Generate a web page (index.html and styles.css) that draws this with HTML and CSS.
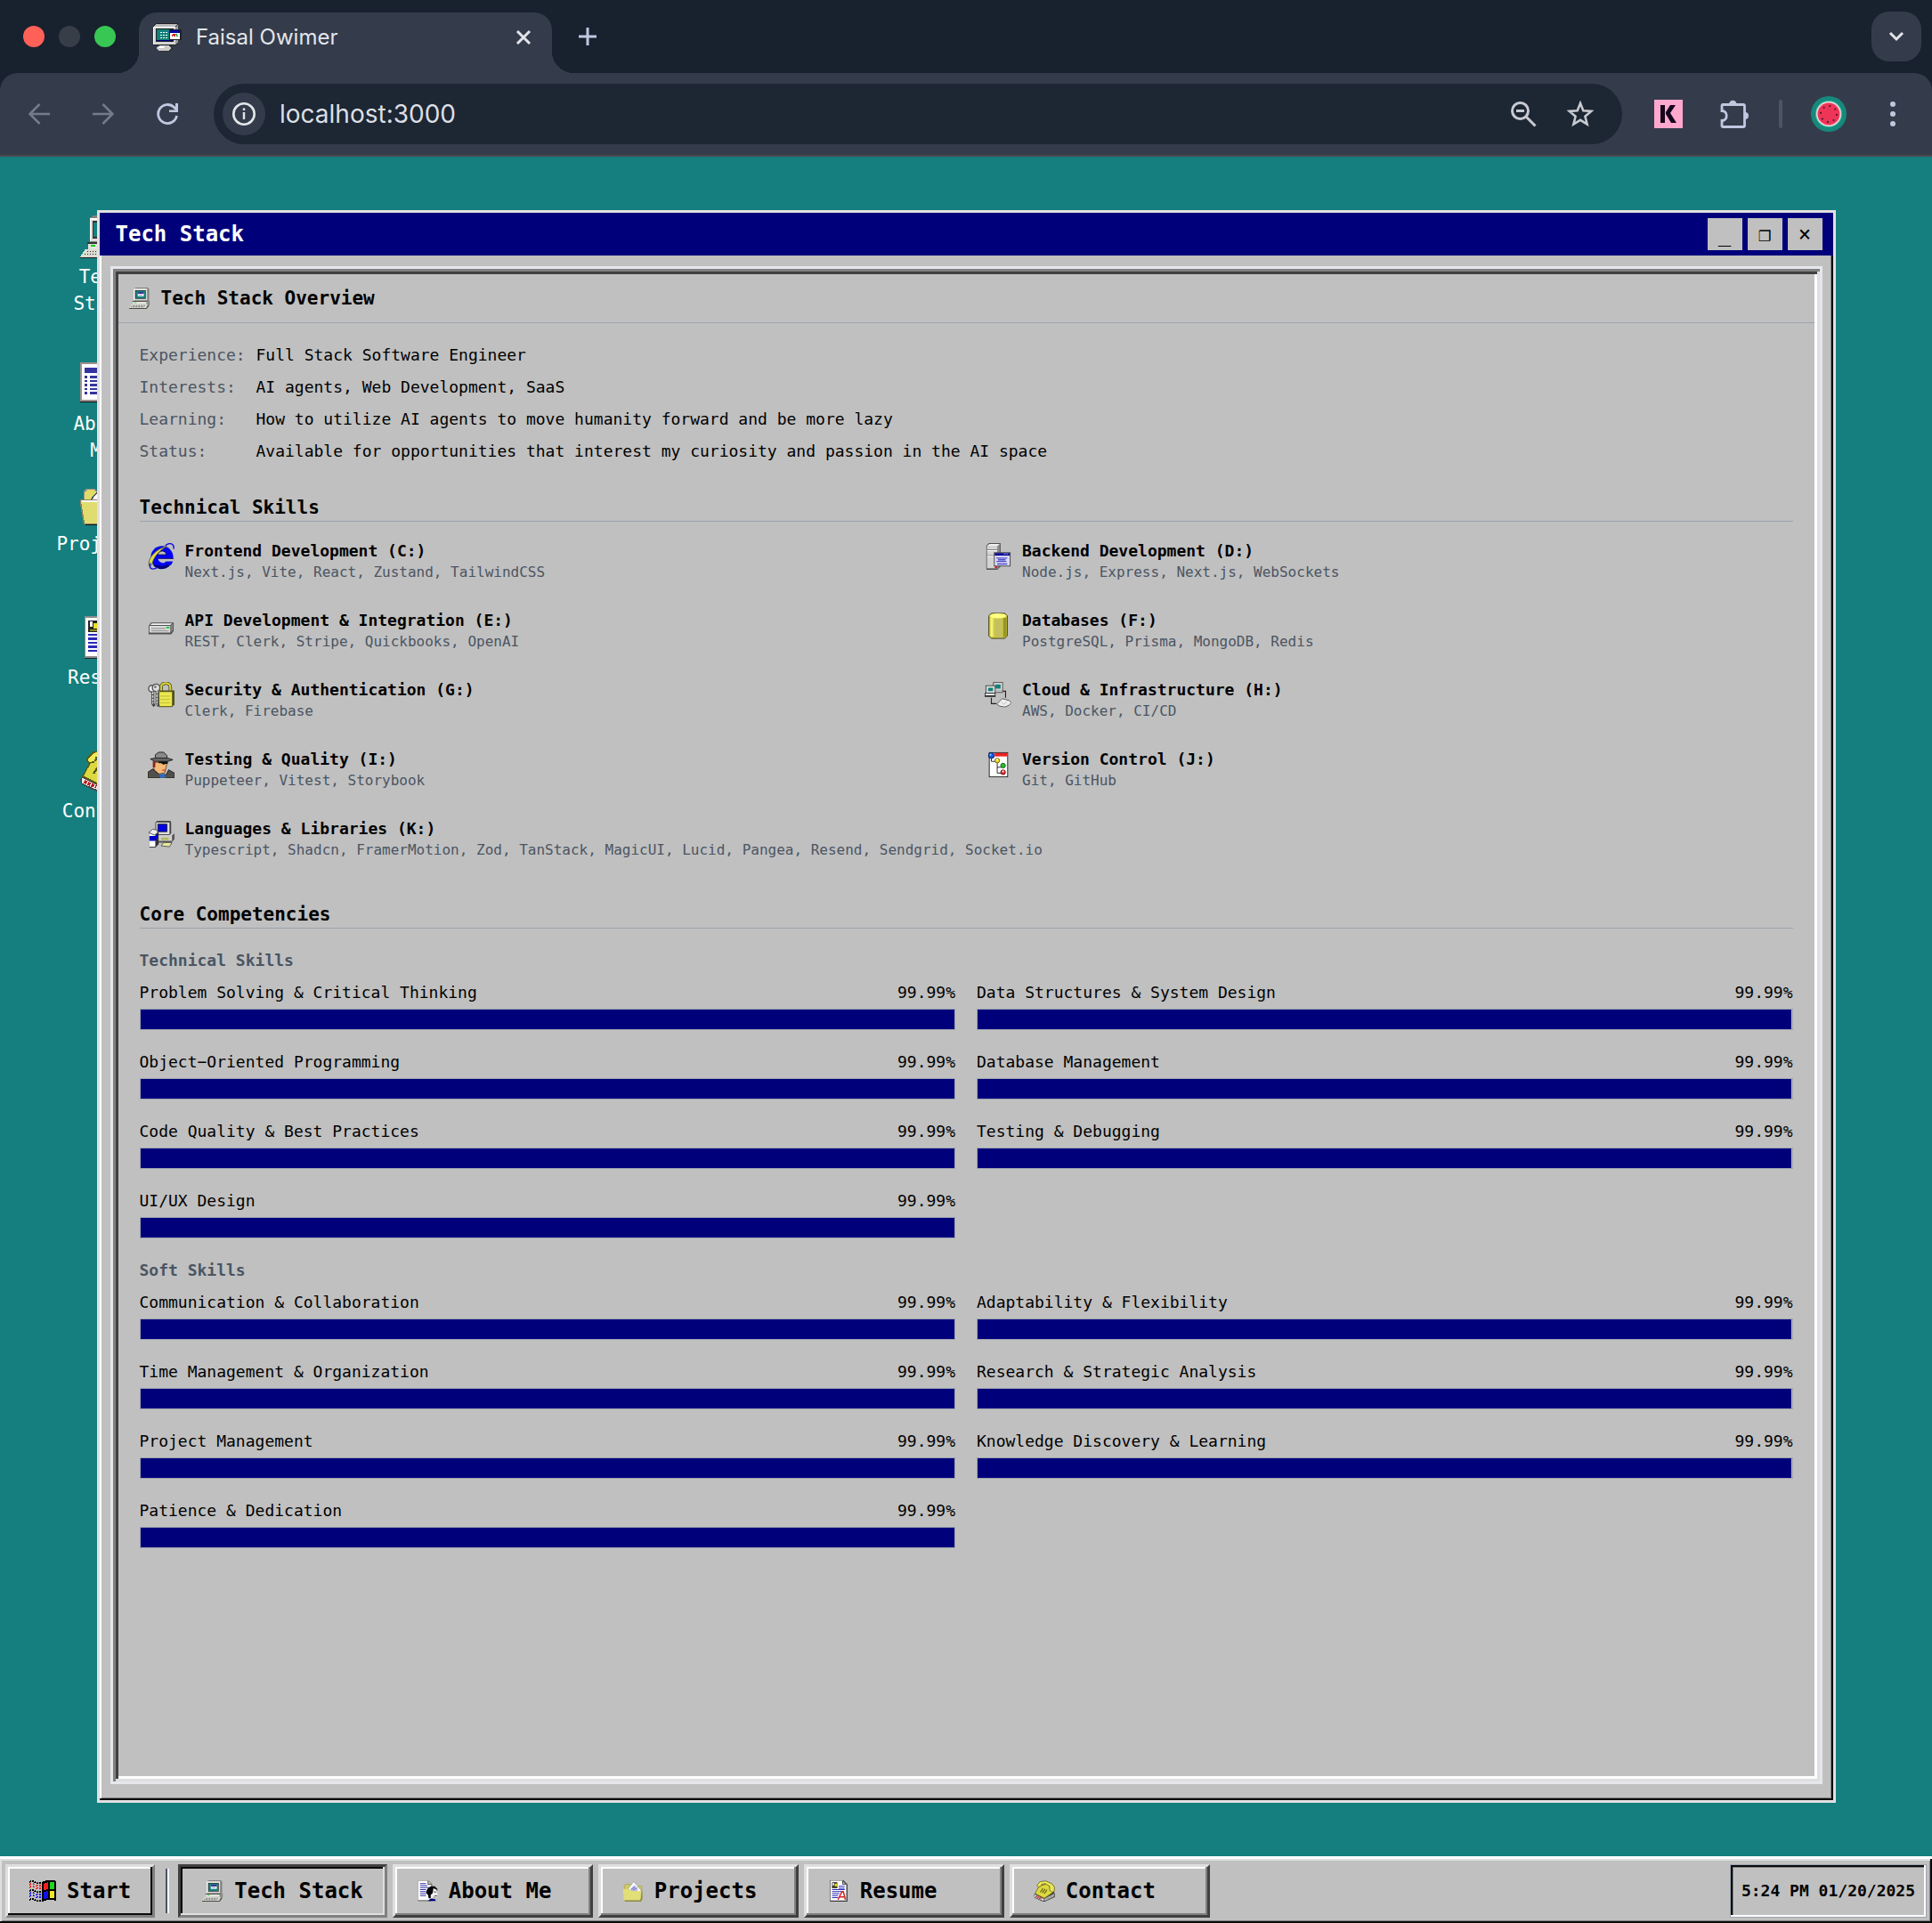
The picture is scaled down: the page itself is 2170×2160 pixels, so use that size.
FILE: index.html
```html
<!DOCTYPE html>
<html lang="en">
<head>
<meta charset="utf-8">
<meta name="viewport" content="width=device-width, initial-scale=1">
<title>Faisal Owimer</title>
<link rel="stylesheet" href="styles.css">
</head>
<body>
<svg class="sprite" aria-hidden="true">
  <symbol id="i-computer" viewBox="0 0 32 32">
    <path d="M7 2l3-2h18l2 2v15l-2 3H7z" fill="#808080"/>
    <path d="M7 2h20v17H7z" fill="#dcdcd4"/><path d="M7 2h20v1H8v16H7z" fill="#fff"/>
    <path d="M9 4h16v13H9z" fill="#333"/><path d="M10 5h14v11H10z" fill="#148080"/>
    <path d="M13 7h9v6h-9z" fill="#fff"/><path d="M13 7h9v2h-9z" fill="#00007a"/><path d="M14 10h6v2h-6z" fill="#b8b8c8"/>
    <path d="M6 21h20l4-3 1 2v6l-4 5z" fill="#8c8c88"/><path d="M6 21h20v4H6z" fill="#e4e4de"/><path d="M5 20h22v1H5z" fill="#333"/>
    <path d="M8 22h3v1H8z" fill="#0c0"/><path d="M4 25h24l-3 6H0z" fill="#dcdcd4"/>
    <path d="M5 27h20M3 29h20" stroke="#222" stroke-dasharray="1 1"/><path d="M0 31h26l3-5v2l-3 4H0z" fill="#222"/>
  </symbol>
  <symbol id="i-list" viewBox="0 0 32 32">
    <path d="M0 0h30v30H0z" fill="#111"/><path d="M0 0h29v29H0z" fill="#a09090"/><path d="M1 1h27v27H1z" fill="#fff"/>
    <path d="M3 5h23M3 7h23M3 11h2M7 11h19M3 14h2M7 14h19M3 17h2M7 17h19M3 20h2M7 20h19M3 23h2M7 23h19" stroke="#3434a0" stroke-width="1.400"/>
  </symbol>
  <symbol id="i-about" viewBox="0 0 32 32">
    <path d="M2 1h16l5 5v25H2z" fill="#222"/><path d="M2 1h15l5 5v24H2z" fill="#fff"/><path d="M17 1v5h5" fill="#ccc" stroke="#222"/>
    <path d="M5 5h9M5 8h11M5 11h14M5 14h9M5 17h9M5 20h9M5 23h9" stroke="#3434a0" stroke-width="1.600"/>
    <path d="M17 12l4-3h6l4 4v2l-3 2v7l-4 3h-6l-1-5-3-3 1-4z" fill="#000"/><path d="M25 12l5 2v4l2 3-2 1v3h-5v2h-4v-5l3-3z" fill="#eee"/>
    <path d="M26 17h3v1h-3zM27 23h3v1h-3z" fill="#000"/><path d="M17 31l3-3h7l2 3z" fill="#000080"/>
  </symbol>
  <symbol id="i-folder" viewBox="0 0 32 32">
    <path d="M3 9l2-3h6l2 3h16v20H3z" fill="#d0cc60" stroke="#a4a040"/>
    <path d="M7 15L17 2l11 13v6H7z" fill="#fff" stroke="#999"/><path d="M12 13l6-6 6 7-3 3h-7z" fill="#bcbce8"/><path d="M13 14l6-4M16 15l6-4" stroke="#5555aa"/>
    <path d="M1 13h10l3 3h14l-1 14H2z" fill="#e2de78"/><path d="M3 30h24l3-16v14l-2 4H4z" fill="#8e8c40"/>
  </symbol>
  <symbol id="i-folder-big" viewBox="0 0 32 32">
    <path d="M3 9V7l2-2h6l2 3h14v22H3z" fill="#e0dc68" stroke="#948e8e"/><path d="M7 14L15 5h8v11H7z" fill="#fff" stroke="#555"/>
    <path d="M0 13h30l-3 18H3z" fill="#e0dc70" stroke="#8a8060"/><path d="M1 14h28" stroke="#fff"/><path d="M4 31h24v1H4z" fill="#111"/>
  </symbol>
  <symbol id="i-resume" viewBox="0 0 32 32">
    <path d="M3 0h20l6 6v26H3z" fill="#222"/><path d="M3 0h19l6 6v25H3z" fill="#8c8c8c"/><path d="M4 1h18l5 5v24H4z" fill="#fff"/><path d="M22 1v5h5z" fill="#c8c8c8" stroke="#222"/>
    <path d="M6 3h8v9H6z" fill="#222"/><path d="M7 4h2v4H7z" fill="#fff"/><path d="M10 5h4v4h-4z" fill="#e8e020"/><path d="M7 10h6v1H7z" fill="#8c8c20"/>
    <path d="M16 9h9M16 12h9M6 14h19M6 17h14M6 20h11M6 23h9M6 26h9" stroke="#2828b8" stroke-width="1.600"/>
    <path d="M15 29l6-12h2l3 12M17 25h8" stroke="#d02020" stroke-width="2" fill="none"/>
  </symbol>
  <symbol id="i-phone" viewBox="0 0 32 32">
    <path d="M0 22l6-6h24l2 5v4L17 32h-3L1 26z" fill="#444"/><path d="M1 21l14 7v3L1 25z" fill="#e8e8e8"/><path d="M15 28l16-8v4L17 31z" fill="#a8a8a8"/>
    <path d="M3 24l9 4" stroke="#c01820" stroke-width="2.400" stroke-dasharray="2 1"/>
    <path d="M2 20L8 9l13-4 8 13-13 9z" fill="#dcd840" stroke="#5c5a10"/><path d="M6 6l4-4 8-1 9 4 4 5v6l-3 2-4-3V9l-7-4-5 1-1 3-4 1-2-2z" fill="#ece858" stroke="#5c5a10"/>
    <path d="M10 18l4-6M13 19l4-6M16 20l4-6" stroke="#555410" stroke-width="1.400"/>
  </symbol>
  <symbol id="i-ie" viewBox="0 0 32 32">
    <circle cx="17" cy="17" r="13.500" fill="#0000f4"/><path d="M6 26a13.500 13.500 0 0 0 23-3l-5 1a9 9 0 0 1-10 3z" fill="#000078"/>
    <path d="M12 14c1-6 10-6 10 0z" fill="#c0c0c0" stroke="#000060"/><path d="M12 18h20v4h-9c-3 3-10 2-11-4z" fill="#c0c0c0"/><path d="M12 18h19v1H12z" fill="#000070"/>
    <path d="M21 22h9l-2 4h-9z" fill="#0000f4"/>
    <path d="M2 28C-2 20 10 6 23 4 14 8 6 18 5 26z" fill="#dcdc48" stroke="#5a5a38"/><path d="M21 3c5-4 11-3 10 4M3 24c-2 7 2 9 9 5" fill="none" stroke="#1010e0" stroke-width="1.500"/>
  </symbol>
  <symbol id="i-server" viewBox="0 0 32 32">
    <path d="M2 3l3-3h14v28l-4 4H2z" fill="#505050"/><path d="M15 4l3-3v26l-3 4z" fill="#8c8c8c"/><path d="M2 4h13v27H2z" fill="#777"/><path d="M3 4h12v26H3z" fill="#d4d4d4"/><path d="M3 3l3-2h12l-3 3H3z" fill="#f0f0f0"/>
    <path d="M3 8h12M3 15h12" stroke="#777"/><path d="M3 9h12M3 16h12" stroke="#fff"/><path d="M12 28h3v2h-3z" fill="#d02020"/>
    <path d="M11 11h20v17H11z" fill="#444"/><path d="M12 12h18v15H12z" fill="#dcdcf6"/><path d="M12 12h18v3H12z" fill="#000090"/><path d="M23 13h5" stroke="#fff" stroke-dasharray="1 1"/>
    <path d="M14 18h13M16 20h9M14 22h12M15 25h12" stroke="#5050c8" stroke-width="1.500"/>
  </symbol>
  <symbol id="i-drive" viewBox="0 0 32 32">
    <path d="M1 16l3-4h27v10l-3 4H1z" fill="#505050"/><path d="M2 16h25v8H2z" fill="#dcdcdc"/><path d="M3 15l2-2h24l-2 2z" fill="#f4f4f4"/><path d="M28 15l2-2v8l-2 3z" fill="#888"/>
    <path d="M4 19h17M4 22h21" stroke="#888"/><path d="M4 20h17" stroke="#bbb"/><path d="M22 17h4v2h-4z" fill="#20c040"/>
  </symbol>
  <symbol id="i-db" viewBox="0 0 32 32">
    <path d="M5 4l3-3h16l3 3v24l-3 3H8l-3-3z" fill="#d4d03c" stroke="#333310"/><path d="M7 6h3v23H7z" fill="#f4f080"/><path d="M12 7h9v23h-9z" fill="#c4c060"/><path d="M22 6h4v22l-4 2z" fill="#98942c"/>
    <ellipse cx="16" cy="4" rx="10" ry="3" fill="#ffff80"/>
  </symbol>
  <symbol id="i-lock" viewBox="0 0 32 32">
    <path d="M16 12V6c0-6 11-6 11 0v6" fill="none" stroke="#44430c" stroke-width="4"/><path d="M16 12V6c0-6 11-6 11 0v6" fill="none" stroke="#d4d040" stroke-width="2.400"/>
    <path d="M13 12l2-2h17v17l-3 3H13z" fill="#54531c"/><path d="M14 12h15v17H14z" fill="#ebe950"/><path d="M15 17h12M15 21h12M15 25h12" stroke="#bcb840"/>
    <circle cx="5" cy="8" r="4" fill="#eee" stroke="#555" stroke-width="1.500"/><circle cx="10" cy="7" r="4.500" fill="#ddd" stroke="#555" stroke-width="1.500"/>
    <circle cx="9" cy="6" r="1.500" fill="#777"/><path d="M6 12v14l2 3M11 11v15l2 3" stroke="#444" stroke-width="3.400"/><path d="M6 12v14M11 11v17" stroke="#ddd" stroke-width="1.600" stroke-dasharray="3 1"/>
  </symbol>
  <symbol id="i-network" viewBox="0 0 32 32">
    <path d="M10 0h12v13H9z" fill="#555"/><path d="M11 1h10v9H11z" fill="#d4d4d4"/><path d="M13 3h6v5h-6z" fill="#108078"/><path d="M10 10h11v2H10z" fill="#ccc"/>
    <path d="M1 4h12v10H1z" fill="#444"/><path d="M2 5h10v8H2z" fill="#e0e0e0"/><path d="M4 7h6v4H4z" fill="#108078"/><path d="M0 13h13v5H0z" fill="#333"/><path d="M1 14h11v2H1z" fill="#eee"/>
    <path d="M22 11h3v8M8 19v7h6" fill="none" stroke="#222" stroke-width="1.200"/>
    <path d="M15 26l3-3 3-3 4 1 4 1 3 3-3 3-5 2-6-1-3-2z" fill="#eee" stroke="#555"/><path d="M20 24l3 3 4-4" stroke="#bbb" fill="none"/>
  </symbol>
  <symbol id="i-spy" viewBox="0 0 32 32">
    <path d="M9 8V4l4-3h6l4 4v5H9z" fill="#888" stroke="#222"/><path d="M3 9l6-1h15l6 2-6 2H8z" fill="#666" stroke="#222"/>
    <path d="M7 13h16l-1 6-2 7-7 1-5-4-1-4z" fill="#f4b878" stroke="#704020"/><path d="M6 12h3v7H6z" fill="#802818"/><path d="M13 12h11v3h-3l-2 1-3-2h-3z" fill="#111"/><path d="M17 22h4v1h-4z" fill="#c02818"/>
    <path d="M0 32V25l6-4 8 7h8l3-6 7 4v6z" fill="#50504c" stroke="#1c1c1c"/><path d="M13 27h8v5h-6z" fill="#3468b0"/>
  </symbol>
  <symbol id="i-version" viewBox="0 0 32 32">
    <path d="M5 1h23v30H5z" fill="#222"/><path d="M6 2h21v28H6z" fill="#fff"/><path d="M12 2h15v4H12z" fill="#f02020"/>
    <path d="M8 7v5h5M15 14v12h6M15 19h5" fill="none" stroke="#222"/><circle cx="8" cy="5" r="3.500" fill="#1858e8" stroke="#102060"/><circle cx="15" cy="11" r="2.800" fill="#e8d820" stroke="#66600c"/>
    <circle cx="22" cy="17" r="2.800" fill="#28c030" stroke="#105c14"/><circle cx="22" cy="25" r="2.800" fill="#e02020" stroke="#701010"/><circle cx="7" cy="4" r="1" fill="#8ef"/><path d="M21 23h2v2h-2zM14 9h2v2h-2z" fill="#fff"/>
  </symbol>
  <symbol id="i-libs" viewBox="0 0 32 32">
    <path d="M9 2l2-2h16l1 2v13l-2 2H9z" fill="#444"/><path d="M10 2h16v14H10z" fill="#ddd"/><path d="M12 4h11v9H12z" fill="#0000e8" stroke="#222"/>
    <path d="M12 17h18l2-2v7l-4 4H12z" fill="#555"/><path d="M12 17h17v7H12z" fill="#d0d0d0"/><path d="M16 20h9v3h-9z" fill="#b4b85c"/>
    <path d="M2 16h7l4-3v15l-4 4H2z" fill="#333"/><path d="M2 16h7v15H2z" fill="#fff"/><path d="M2 18h7l3-3v5l-3 4H2z" fill="#0000c8"/><path d="M1 14l5-4 5 1 1 3-4 3z" fill="#eee" stroke="#555"/>
    <path d="M16 30l3-4h10l-3 5z" fill="#e8e8a0" stroke="#555"/>
  </symbol>
  <symbol id="i-flag" viewBox="0 0 30 24">
    <path d="M14 2l5-2h8l3 1v22l-4-1h-6l-6 2z" fill="#000"/><path d="M16 4l5-2v8l-5 1z" fill="#f02020"/><path d="M23 2h5v8h-5z" fill="#20d820"/><path d="M16 13l5-1v8l-5 1z" fill="#1010f0"/><path d="M23 12h5v8h-5z" fill="#f0e820"/>
    <path d="M0 2q3-2 6 0t8 1" stroke="#000" stroke-width="2" stroke-dasharray="2 1" fill="none"/><path d="M0 5q3-2 6 0t8 1M0 8q3-2 6 0t8 1" stroke="#f02020" stroke-width="1.600" stroke-dasharray="2 2" fill="none"/>
    <path d="M0 12q3-2 6 0t8 1M0 22q3-2 6 0t8 1" stroke="#000" stroke-width="1.600" stroke-dasharray="2 1" fill="none"/><path d="M0 15q3-2 6 0t8 1M0 18q3-2 6 0t8 1" stroke="#1010f0" stroke-width="1.600" stroke-dasharray="2 2" fill="none"/>
  </symbol>
  <symbol id="i-favicon" viewBox="0 0 32 32">
    <path d="M0 3l3-3h25v23l-3 2H0z" fill="#222"/><path d="M0 4h25v20H0z" fill="#d4d4d4"/><path d="M1 3l2-2h24l-2 3H1z" fill="#bbb"/><path d="M25 4l3-3v20l-3 3z" fill="#999"/><path d="M0 4h25v1H1v19H0z" fill="#fff"/>
    <path d="M3 6h20v15H3z" fill="#222"/><path d="M4 7h18v12H4z" fill="#108078"/><path d="M4 19h18v1H4z" fill="#000080"/>
    <path d="M8 10.500h9M8 13.500h9M8 16.500h9" stroke="#fff" stroke-dasharray="2 1"/>
    <path d="M18 7h14v12H18z" fill="#222"/><path d="M19 8h11v10H19z" fill="#fff"/><path d="M19 8h11v3H19z" fill="#0000a0"/><path d="M21 14l2-1M24 15v-3" stroke="#d02020" stroke-width="1.500"/><path d="M26 12l1 3" stroke="#10a030" stroke-width="1.500"/>
    <path d="M3 28l5-3h11l4 3-3 4H7z" fill="#333"/><path d="M3 28l5-3h9l4 3-4 3H7z" fill="#ccc"/><path d="M5 27l3-1h5l-2 2H6z" fill="#fff"/>
  </symbol>
</svg>

<header class="chrome">
  <div class="tabstrip">
    <div class="lights"><span class="light light-close"></span><span class="light light-min"></span><span class="light light-max"></span></div>
    <div class="tab">
      <svg class="favicon" shape-rendering="crispEdges"><use href="#i-favicon"/></svg>
      <span class="tab-title">Faisal Owimer</span>
      <button class="plain" aria-label="Close tab"><svg width="20" height="20" viewBox="0 0 20 20"><path d="M3 3l14 14M17 3L3 17" stroke="#e3e5ea" stroke-width="3"/></svg></button>
    </div>
    <button class="plain new-tab" aria-label="New tab"><svg width="20" height="20" viewBox="0 0 20 20"><path d="M10 0v20M0 10h20" stroke="#c0c8e0" stroke-width="3"/></svg></button>
    <button class="plain tab-search" aria-label="Search tabs"><svg width="20" height="14" viewBox="0 0 20 14"><path d="M3 3l7 7 7-7" fill="none" stroke="#e3e5ea" stroke-width="3"/></svg></button>
  </div>
  <div class="toolbar">
    <div class="nav">
      <button class="plain" aria-label="Back"><svg width="24" height="24" viewBox="0 0 24 24"><path d="M24 12H2M12.500 1L1.500 12l11 11" fill="none" stroke="#747b89" stroke-width="2.600"/></svg></button>
      <button class="plain" aria-label="Forward"><svg width="24" height="24" viewBox="0 0 24 24"><path d="M0 12h22M11.500 1l11 11-11 11" fill="none" stroke="#747b89" stroke-width="2.600"/></svg></button>
      <button class="plain" aria-label="Reload"><svg width="24" height="24" viewBox="0 0 24 24"><path d="M22.500 14A10.500 10.500 0 1 1 19.500 4.500L23 8" fill="none" stroke="#c0c8e0" stroke-width="2.800"/><path d="M24 0v10H14V7.500h7V0z" fill="#c0c8e0"/></svg></button>
    </div>
    <div class="omnibox">
      <button class="plain site-info" aria-label="Site information"><svg width="26" height="26" viewBox="0 0 26 26"><circle cx="13" cy="13" r="11.700" fill="none" stroke="#e3e5ea" stroke-width="2.600"/><path d="M13 11v8M13 6.500v2.500" stroke="#e3e5ea" stroke-width="2.400"/></svg></button>
      <input class="url" type="text" value="localhost:3000" aria-label="Address">
      <button class="plain" aria-label="Zoom"><svg width="30" height="30" viewBox="0 0 30 30"><circle cx="11.500" cy="11.500" r="9" fill="none" stroke="#c7cad0" stroke-width="3"/><path d="M18 18l10.500 10.500M7 11.500h9" stroke="#c7cad0" stroke-width="3"/></svg></button>
      <button class="plain" aria-label="Bookmark this tab"><svg width="30" height="30" viewBox="0 0 30 30"><path d="M15 3l3.300 8.200 9 .7-6.900 5.800 2.200 8.800L15 21.800l-7.600 4.700 2.200-8.800L2.700 11.900l9-.7z" fill="none" stroke="#c7cad0" stroke-width="2.600"/></svg></button>
    </div>
    <div class="tools">
      <button class="plain" aria-label="K extension"><svg width="32" height="32" viewBox="0 0 32 32"><path d="M0 0h32v32H0z" fill="#ffa8cd"/><path d="M7 6h5v20H7zM18 6h6l-6 9 7 11h-6l-6-10v-2z" fill="#14061e"/></svg></button>
      <button class="plain" aria-label="Extensions"><svg width="32" height="32" viewBox="0 0 32 32"><path d="M2 5.500h24q1.500 0 1.500 1.500v22q0 1.500-1.500 1.500H3.500Q2 30.500 2 29v-5.500c7 0 7-11 0-11V7q0-1.500 1.500-1.500z" fill="none" stroke="#c0c8e0" stroke-width="2.800"/><path d="M10 5a4.300 4.300 0 0 1 8.600 0zM28 14a4 4 0 0 1 0 8z" fill="#c0c8e0"/></svg></button>
      <span class="divider"></span>
      <button class="plain" aria-label="Profile"><svg width="40" height="40" viewBox="0 0 40 40"><circle cx="20" cy="20" r="20" fill="#17897c"/><circle cx="20" cy="20" r="15" fill="#2cc4a4"/><circle cx="20" cy="20" r="14" fill="#f4d4d8"/><circle cx="20" cy="20" r="12.500" fill="#ee3558"/><circle cx="20" cy="20" r="9" fill="none" stroke="#521c30" stroke-width="2" stroke-dasharray="2 5.070"/></svg></button>
      <button class="plain menu" aria-label="Menu"><svg width="8" height="28" viewBox="0 0 8 28"><g fill="#c0c8e0"><circle cx="4" cy="3" r="3"/><circle cx="4" cy="14" r="3"/><circle cx="4" cy="25" r="3"/></g></svg></button>
    </div>
  </div>
</header>

<main class="desktop">
  <button class="shortcut shortcut-tech"><svg shape-rendering="crispEdges"><use href="#i-computer"/></svg><span>Tech Stack</span></button>
  <button class="shortcut shortcut-about"><svg shape-rendering="crispEdges"><use href="#i-list"/></svg><span>About Me</span></button>
  <button class="shortcut shortcut-projects"><svg shape-rendering="crispEdges"><use href="#i-folder-big"/></svg><span>Projects</span></button>
  <button class="shortcut shortcut-resume"><svg shape-rendering="crispEdges"><use href="#i-resume"/></svg><span>Resume</span></button>
  <button class="shortcut shortcut-contact"><svg shape-rendering="crispEdges"><use href="#i-phone"/></svg><span>Contact</span></button>

  <section class="window" aria-labelledby="window-title">
    <div class="titlebar">
      <h1 id="window-title">Tech Stack</h1>
      <div class="controls">
        <button aria-label="Minimize">_</button>
        <button aria-label="Maximize">❐</button>
        <button aria-label="Close">×</button>
      </div>
    </div>
    <div class="panel">
      <div class="panel-head"><svg><use href="#i-computer"/></svg><h2>Tech Stack Overview</h2></div>
      <div class="content">
        <dl class="facts">
          <dt>Experience:</dt><dd>Full Stack Software Engineer</dd>
          <dt>Interests:</dt><dd>AI agents, Web Development, SaaS</dd>
          <dt>Learning:</dt><dd>How to utilize AI agents to move humanity forward and be more lazy</dd>
          <dt>Status:</dt><dd>Available for opportunities that interest my curiosity and passion in the AI space</dd>
        </dl>

        <section class="block">
          <h2 class="heading">Technical Skills</h2>
          <ul class="drives">
            <li><svg><use href="#i-ie"/></svg><div><h3>Frontend Development (C:)</h3><p>Next.js, Vite, React, Zustand, TailwindCSS</p></div></li>
            <li><svg><use href="#i-server"/></svg><div><h3>Backend Development (D:)</h3><p>Node.js, Express, Next.js, WebSockets</p></div></li>
            <li><svg><use href="#i-drive"/></svg><div><h3>API Development &amp; Integration (E:)</h3><p>REST, Clerk, Stripe, Quickbooks, OpenAI</p></div></li>
            <li><svg><use href="#i-db"/></svg><div><h3>Databases (F:)</h3><p>PostgreSQL, Prisma, MongoDB, Redis</p></div></li>
            <li><svg><use href="#i-lock"/></svg><div><h3>Security &amp; Authentication (G:)</h3><p>Clerk, Firebase</p></div></li>
            <li><svg><use href="#i-network"/></svg><div><h3>Cloud &amp; Infrastructure (H:)</h3><p>AWS, Docker, CI/CD</p></div></li>
            <li><svg><use href="#i-spy"/></svg><div><h3>Testing &amp; Quality (I:)</h3><p>Puppeteer, Vitest, Storybook</p></div></li>
            <li><svg><use href="#i-version"/></svg><div><h3>Version Control (J:)</h3><p>Git, GitHub</p></div></li>
            <li class="wide"><svg><use href="#i-libs"/></svg><div><h3>Languages &amp; Libraries (K:)</h3><p>Typescript, Shadcn, FramerMotion, Zod, TanStack, MagicUI, Lucid, Pangea, Resend, Sendgrid, Socket.io</p></div></li>
          </ul>
        </section>

        <section class="block">
          <h2 class="heading">Core Competencies</h2>
          <div class="groups">
            <div class="group">
              <h3>Technical Skills</h3>
              <ul class="meters">
                <li><p><span>Problem Solving &amp; Critical Thinking</span><span>99.99%</span></p><div class="bar"><div class="fill" style="width:99.99%"></div></div></li>
                <li><p><span>Data Structures &amp; System Design</span><span>99.99%</span></p><div class="bar"><div class="fill" style="width:99.99%"></div></div></li>
                <li><p><span>Object−Oriented Programming</span><span>99.99%</span></p><div class="bar"><div class="fill" style="width:99.99%"></div></div></li>
                <li><p><span>Database Management</span><span>99.99%</span></p><div class="bar"><div class="fill" style="width:99.99%"></div></div></li>
                <li><p><span>Code Quality &amp; Best Practices</span><span>99.99%</span></p><div class="bar"><div class="fill" style="width:99.99%"></div></div></li>
                <li><p><span>Testing &amp; Debugging</span><span>99.99%</span></p><div class="bar"><div class="fill" style="width:99.99%"></div></div></li>
                <li><p><span>UI/UX Design</span><span>99.99%</span></p><div class="bar"><div class="fill" style="width:99.99%"></div></div></li>
              </ul>
            </div>
            <div class="group">
              <h3>Soft Skills</h3>
              <ul class="meters">
                <li><p><span>Communication &amp; Collaboration</span><span>99.99%</span></p><div class="bar"><div class="fill" style="width:99.99%"></div></div></li>
                <li><p><span>Adaptability &amp; Flexibility</span><span>99.99%</span></p><div class="bar"><div class="fill" style="width:99.99%"></div></div></li>
                <li><p><span>Time Management &amp; Organization</span><span>99.99%</span></p><div class="bar"><div class="fill" style="width:99.99%"></div></div></li>
                <li><p><span>Research &amp; Strategic Analysis</span><span>99.99%</span></p><div class="bar"><div class="fill" style="width:99.99%"></div></div></li>
                <li><p><span>Project Management</span><span>99.99%</span></p><div class="bar"><div class="fill" style="width:99.99%"></div></div></li>
                <li><p><span>Knowledge Discovery &amp; Learning</span><span>99.99%</span></p><div class="bar"><div class="fill" style="width:99.99%"></div></div></li>
                <li><p><span>Patience &amp; Dedication</span><span>99.99%</span></p><div class="bar"><div class="fill" style="width:99.99%"></div></div></li>
              </ul>
            </div>
          </div>
        </section>
      </div>
    </div>
  </section>
</main>

<footer class="taskbar">
  <button class="start"><svg shape-rendering="crispEdges"><use href="#i-flag"/></svg>Start</button>
  <span class="separator"></span>
  <nav class="tasks">
    <button class="task active"><svg><use href="#i-computer"/></svg>Tech Stack</button>
    <button class="task"><svg><use href="#i-about"/></svg>About Me</button>
    <button class="task"><svg><use href="#i-folder"/></svg>Projects</button>
    <button class="task"><svg><use href="#i-resume"/></svg>Resume</button>
    <button class="task"><svg><use href="#i-phone"/></svg>Contact</button>
  </nav>
  <time class="clock" datetime="2025-01-20T17:24">5:24 PM 01/20/2025</time>
</footer>
</body>
</html>
```
FILE: styles.css
```css
:root {
  --mono: "DejaVu Sans Mono", "Liberation Mono", monospace;
  --ui: Inter, "Liberation Sans", sans-serif;
  --face: #c0c0c0;
  --light: #dfdfdf;
  --shade: #808080;
  --dark: #404040;
  --navy: #00007b;
  --rule: #9ca3af;
  --muted: #4b5563;
  --chrome: #343c4b;
}

* { box-sizing: border-box; }

body {
  margin: 0;
  min-height: 100vh;
  display: flex;
  flex-direction: column;
  background: #147f7e;
  color: #000;
  font-family: var(--mono);
  font-size: 18px;
  line-height: 24px;
}

h1, h2, h3, p, ul, dl, dd { margin: 0; padding: 0; }
ul { list-style: none; }
button { font: inherit; color: inherit; margin: 0; }
svg { display: block; flex: none; }
.sprite { position: absolute; width: 0; height: 0; }

/* Browser chrome */
.chrome { background: #18212e; font-family: var(--ui); }
.plain { border: 0; padding: 0; background: none; display: grid; place-items: center; }

.tabstrip { display: flex; align-items: center; height: 82px; padding: 0 12px 0 26px; }
.lights { display: flex; gap: 16px; width: 130px; }
.light { width: 24px; height: 24px; border-radius: 50%; }
.light-close { background: #ff6159; }
.light-min { background: #373e48; }
.light-max { background: #38c753; }

.tab {
  position: relative;
  align-self: flex-end;
  display: flex;
  align-items: center;
  width: 464px;
  height: 68px;
  padding: 0 22px 12px 16px;
  border-radius: 20px 20px 0 0;
  background: var(--chrome);
}
.tab::before, .tab::after {
  content: "";
  position: absolute;
  bottom: 0;
  width: 24px;
  height: 24px;
}
.tab::before { right: 100%; background: radial-gradient(circle at 0 0, transparent 24px, var(--chrome) 24px); }
.tab::after { left: 100%; background: radial-gradient(circle at 100% 0, transparent 24px, var(--chrome) 24px); }
.favicon { width: 32px; height: 32px; }
.tab-title { flex: 1; padding-left: 16px; font-size: 24px; color: #e3e5ea; }
.new-tab { margin-left: 30px; }
.tab-search { width: 56px; height: 56px; margin-left: auto; border-radius: 20px; background: var(--chrome); }

.toolbar {
  display: flex;
  align-items: center;
  height: 94px;
  padding: 0 40px 0 32px;
  border-bottom: 2px solid #4a4a50;
  border-radius: 20px 20px 0 0;
  background: var(--chrome);
}
.nav { display: flex; gap: 48px; }
.omnibox {
  flex: 1;
  display: flex;
  align-items: center;
  gap: 34px;
  height: 68px;
  margin: 0 36px 0 40px;
  padding: 0 32px 0 10px;
  border-radius: 34px;
  background: #1d2633;
}
.site-info { width: 48px; height: 48px; margin-right: -18px; border-radius: 50%; background: var(--chrome); }
.url {
  flex: 1;
  min-width: 0;
  padding: 0;
  border: 0;
  outline: 0;
  background: none;
  color: #dcdfe4;
  font: 28px/36px var(--ui);
}
.tools { display: flex; align-items: center; gap: 42px; }
.divider { width: 4px; height: 32px; margin: 0 -10px 0 -8px; border-radius: 2px; background: #4d5563; }
.menu { margin-left: 6px; }

/* Desktop */
.desktop { position: relative; flex: 1; display: flex; padding: 60px 5%; }
.shortcut {
  position: absolute;
  left: 66px;
  width: 96px;
  padding: 0;
  border: 0;
  background: none;
  display: flex;
  flex-direction: column;
  align-items: center;
  gap: 6px;
  color: #fff;
  font-size: 21px;
  line-height: 30px;
  text-align: center;
}
.shortcut svg { width: 48px; height: 48px; }
.shortcut-tech { top: 66px; }
.shortcut-about { top: 231px; }
.shortcut-projects { top: 366px; }
.shortcut-resume { top: 516px; }
.shortcut-contact { top: 666px; }

.window {
  position: relative;
  flex: 1;
  min-width: 0;
  display: flex;
  flex-direction: column;
  border: 3px solid #e2e0e2;
  background: var(--face);
  box-shadow: inset -2px -2px #0a0a0a, inset 2px 2px #fff, inset -3px -3px var(--shade);
}
.titlebar {
  display: flex;
  align-items: center;
  justify-content: space-between;
  height: 48px;
  padding: 0 12px 0 18px;
  background: var(--navy);
  color: #fff;
}
.titlebar h1 { font-size: 24px; line-height: 36px; }
.controls { display: flex; gap: 6px; }
.controls button {
  width: 39px;
  height: 36px;
  padding: 0;
  border: 0;
  background: var(--face);
  color: #000;
  font-size: 24px;
  line-height: 36px;
}
.panel {
  flex: 1;
  margin: 12px 12px 18px;
  border: 3px solid #e5e7eb;
  box-shadow: inset 3px 3px var(--shade), inset -3px -3px var(--light), inset 6px 6px var(--dark), inset -6px -6px #fff;
  padding: 6px;
}
.panel-head {
  display: flex;
  align-items: center;
  gap: 12px;
  padding: 12px;
  border-bottom: 1px solid var(--rule);
}
.panel-head svg { width: 24px; height: 24px; }
.panel-head h2, .heading { font-size: 21px; line-height: 30px; }

.content { padding: 24px; }
.facts { display: grid; grid-template-columns: 119px 1fr; gap: 12px; }
.facts dt { color: var(--muted); }
.block { margin-top: 36px; }
.heading { border-bottom: 1px solid var(--rule); }

.drives { display: grid; grid-template-columns: 1fr 1fr; gap: 12px 24px; margin-top: 12px; }
.drives li { display: flex; gap: 12px; padding: 9px; }
.drives .wide { grid-column: 1 / -1; }
.drives svg { width: 30px; height: 30px; margin-top: 3px; }
.drives h3 { font-size: 18px; }
.drives p { font-size: 16px; color: var(--muted); }

.groups { display: grid; gap: 24px; margin-top: 24px; }
.group h3 { font-size: 18px; color: var(--muted); }
.meters { display: grid; grid-template-columns: 1fr 1fr; gap: 24px; margin-top: 12px; }
.meters p { display: flex; justify-content: space-between; }
.bar { height: 24px; margin-top: 6px; border: 1px solid var(--rule); }
.fill { height: 100%; background: var(--navy); }

/* Taskbar */
.taskbar {
  display: flex;
  align-items: center;
  padding: 6px;
  border-top: 3px solid #fff;
  background: var(--face);
  box-shadow: inset -2px -2px #0a0a0a, inset 2px 2px var(--light), inset -3px -3px var(--shade);
}
.start, .task {
  display: flex;
  align-items: center;
  gap: 12px;
  height: 60px;
  padding: 0 24px;
  border: 3px solid;
  background: var(--face);
  font-size: 24px;
  font-weight: bold;
}
.start { border-color: var(--light) var(--shade) var(--shade) var(--light); box-shadow: inset -2px -2px #0a0a0a, inset 2px 2px #fff; }
.start svg { width: 30px; height: 24px; }
.separator { width: 4px; height: 50px; margin: 0 10px 0 12px; border-left: 2px solid var(--muted); border-right: 2px solid #fff; }
.tasks { display: flex; gap: 6px; }
.task { min-width: 225px; border-color: var(--light) var(--dark) var(--dark) var(--light); box-shadow: inset -2px -2px var(--shade), inset 2px 2px #fff; }
.task svg { width: 24px; height: 24px; }
.task.active { border-color: var(--dark) var(--shade) var(--shade) var(--dark); box-shadow: inset -2px -2px var(--light), inset 2px 2px #0a0a0a; }
.clock {
  display: flex;
  align-items: center;
  height: 60px;
  margin-left: auto;
  padding: 0 12px;
  border: 1px solid var(--rule);
  font-weight: bold;
  box-shadow: inset -2px -2px #fff, inset 2px 2px #0a0a0a, inset 3px 3px var(--shade);
}
```
